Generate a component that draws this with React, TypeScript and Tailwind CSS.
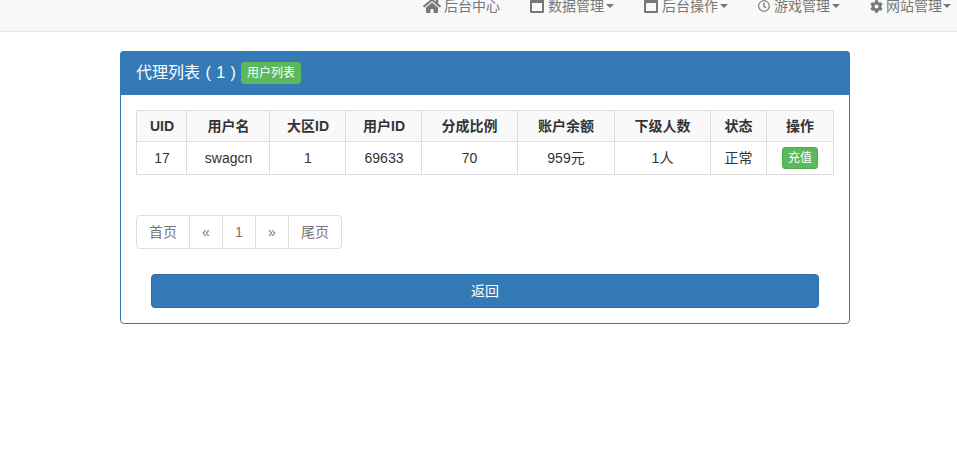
import { FaCog, FaHome, FaRegClock } from "react-icons/fa";
import type { ReactNode } from "react";

const font = "font-['Liberation_Sans','Noto_Sans_CJK_SC',sans-serif]";

function WindowIcon() {
  return (
    <svg viewBox="0 0 14 14" className="w-[14px] h-[14px] shrink-0" fill="currentColor">
      <path fillRule="evenodd" d="M1 0h12a1 1 0 0 1 1 1v12a1 1 0 0 1-1 1H1a1 1 0 0 1-1-1V1a1 1 0 0 1 1-1zM2 4v8h10V4z" />
    </svg>
  );
}

type NavItem = { icon: ReactNode; label: string; caret: boolean; cls: string };

const navItems: NavItem[] = [
  { icon: <FaHome className="w-[18px] h-[16px] shrink-0" />, label: "后台中心", caret: false, cls: "w-[77px] gap-[3px]" },
  { icon: <WindowIcon />, label: "数据管理", caret: true, cls: "w-[84px] gap-[4px]" },
  { icon: <WindowIcon />, label: "后台操作", caret: true, cls: "w-[84px] gap-[4px]" },
  { icon: <FaRegClock className="w-[12px] h-[12px] shrink-0" />, label: "游戏管理", caret: true, cls: "w-[82px] gap-[4px]" },
  { icon: <FaCog className="w-[13px] h-[13px] shrink-0" />, label: "网站管理", caret: true, cls: "w-[81px] gap-[3px]" },
];

const columns = [
  { title: "UID", value: "17", width: "w-[50px] pl-px" },
  { title: "用户名", value: "swagcn", width: "w-[83px] pl-px" },
  { title: "大区ID", value: "1", width: "w-[76px] pl-px" },
  { title: "用户ID", value: "69633", width: "w-[76px] pl-px" },
  { title: "分成比例", value: "70", width: "w-[96px]" },
  { title: "账户余额", value: "959元", width: "w-[97px]" },
  { title: "下级人数", value: "1人", width: "w-[96px]" },
  { title: "状态", value: "正常", width: "w-[56px]" },
];

const pages = [
  { label: "首页", cls: "w-[54px] rounded-l" },
  { label: "«", cls: "w-[34px] -ml-px" },
  { label: "1", cls: "w-[34px] -ml-px" },
  { label: "»", cls: "w-[34px] -ml-px" },
  { label: "尾页", cls: "w-[54px] -ml-px rounded-r" },
];

export default function App() {
  return (
    <div className={`${font} min-h-[455px] bg-white text-[14px] text-[#333]`}>
      <nav className="h-[32px] bg-[#f8f8f8] border-b border-[#e7e7e7] flex justify-end overflow-hidden">
        <div className="flex gap-[30px] -mt-[4px] h-[20px] mr-[6px]">
          {navItems.map((item) => (
            <a key={item.label} className={`${item.cls} flex items-center text-[#777] whitespace-nowrap`}>
              {item.icon}
              <span>{item.label}</span>
              {item.caret && (
                <span className="-ml-[2px] w-0 h-0 border-x-[4px] border-x-transparent border-t-[4px] border-t-[#777]" />
              )}
            </a>
          ))}
        </div>
      </nav>

      <div className="w-[730px] ml-[120px] mt-[19px] h-[273px] border border-[#337ab7] rounded bg-white">
        <div className="h-[44px] bg-[#337ab7] flex items-center text-white text-[16px] -mt-px -mx-px pl-[16px] rounded-t">
          <span className="whitespace-pre [word-spacing:1px]">代理列表 ( 1 )</span>
          <span className="ml-[5px] h-[22px] w-[60px] flex items-center justify-center bg-[#5cb85c] rounded-[3px] text-[12px]">
            用户列表
          </span>
        </div>

        <div className="px-[15px] pt-[15px]">
          <table className="table-fixed border-collapse w-[698px] text-center">
            <thead>
              <tr className="bg-[#f9f9f9] h-[31px]">
                {columns.map((c) => (
                  <th key={c.title} className={`${c.width} border border-[#ddd] font-bold text-[14px] p-0`}>
                    {c.title}
                  </th>
                ))}
                <th className="border border-[#ddd] font-bold p-0">操作</th>
              </tr>
            </thead>
            <tbody>
              <tr className="h-[33px]">
                {columns.map((c) => (
                  <td key={c.title} className={`${c.width} border border-[#ddd] p-0`}>
                    {c.value}
                  </td>
                ))}
                <td className="border border-[#ddd] p-0">
                  <button className="w-[36px] h-[22px] bg-[#5cb85c] border border-[#4cae4c] rounded-[3px] text-white text-[12px] align-middle">
                    充值
                  </button>
                </td>
              </tr>
            </tbody>
          </table>

          <div className="flex mt-[40px] h-[34px] text-[#777]">
            {pages.map((p) => (
              <a key={p.label} className={`${p.cls} border border-[#ddd] flex items-center justify-center bg-white`}>
                {p.label}
              </a>
            ))}
          </div>

          <button className="block w-[668px] h-[34px] ml-[15px] mt-[25px] bg-[#337ab7] border border-[#2e6da4] rounded text-white">
            返回
          </button>
        </div>
      </div>
    </div>
  );
}
